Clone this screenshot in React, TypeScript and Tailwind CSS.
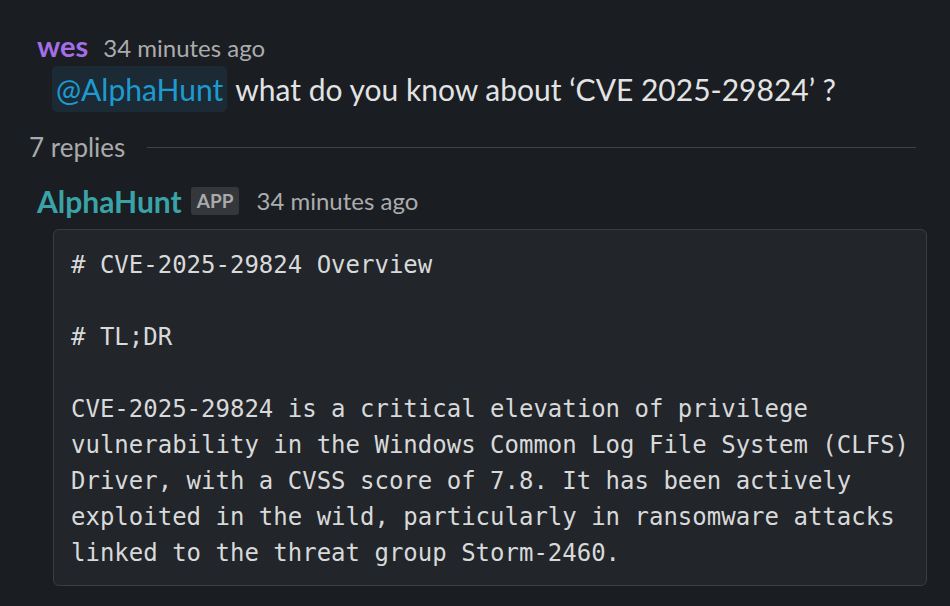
export default function App() {
  const code = [
    '# CVE-2025-29824 Overview',
    '',
    '# TL;DR',
    '',
    'CVE-2025-29824 is a critical elevation of privilege',
    'vulnerability in the Windows Common Log File System (CLFS)',
    'Driver, with a CVSS score of 7.8. It has been actively',
    'exploited in the wild, particularly in ransomware attacks',
    'linked to the threat group Storm-2460.',
  ]

  return (
    <div className="w-[950px] h-[606px] overflow-hidden bg-[#1a1d21] font-['Lato','Noto_Sans',sans-serif] text-[#d1d2d3]">
      {/* parent message */}
      <div className="pl-[37px] pt-[24px]">
        <div className="flex items-baseline gap-[15px] h-[34px]">
          <span className="text-[29px] font-bold text-[#a36ee8]">wes</span>
          <span className="text-[24px] text-[#abacad]">34 minutes ago</span>
        </div>
        <div className="flex items-center mt-[8px] ml-[15px] h-[46px]">
          <span className="bg-[#1c2a35] text-[#1d9bd1] text-[30px] rounded-[5px] px-[4px] h-[46px] flex items-center">
            @AlphaHunt
          </span>
          <span className="ml-[8px] text-[30px] text-[#e3e3e4]">
            what do you know about ‘CVE 2025-29824’ ?
          </span>
        </div>
      </div>

      {/* replies divider */}
      <div className="flex items-center pl-[29px] pr-[34px] mt-[20px] h-[30px]">
        <span className="text-[26px] text-[#a9aaab]">7 replies</span>
        <div className="flex-1 ml-[22px] h-px bg-[#404246]" />
      </div>

      {/* reply */}
      <div className="pl-[37px] pr-[23px] mt-[24px]">
        <div className="flex items-center h-[30px]">
          <span className="text-[30px] font-bold text-[#3aa3a8]">AlphaHunt</span>
          <span className="ml-[9px] bg-[#35373b] text-[#a9aaab] text-[19px] font-bold rounded-[3px] px-[6px] h-[28px] flex items-center">
            APP
          </span>
          <span className="ml-[17px] text-[24px] text-[#abacad]">34 minutes ago</span>
        </div>
        <div className="mt-[13px] ml-[16px] border border-[#3b3d41] bg-[#222529] rounded-[6px] pl-[17px] pt-[17px] pb-[15px] h-[357px]">
          {code.map((line, i) => (
            <div
              key={i}
              className="font-['DejaVu_Sans_Mono',monospace] text-[24px] leading-[36px] h-[36px] whitespace-pre text-[#d8d9da]">
              {line}
            </div>
          ))}
        </div>
      </div>
    </div>
  )
}
